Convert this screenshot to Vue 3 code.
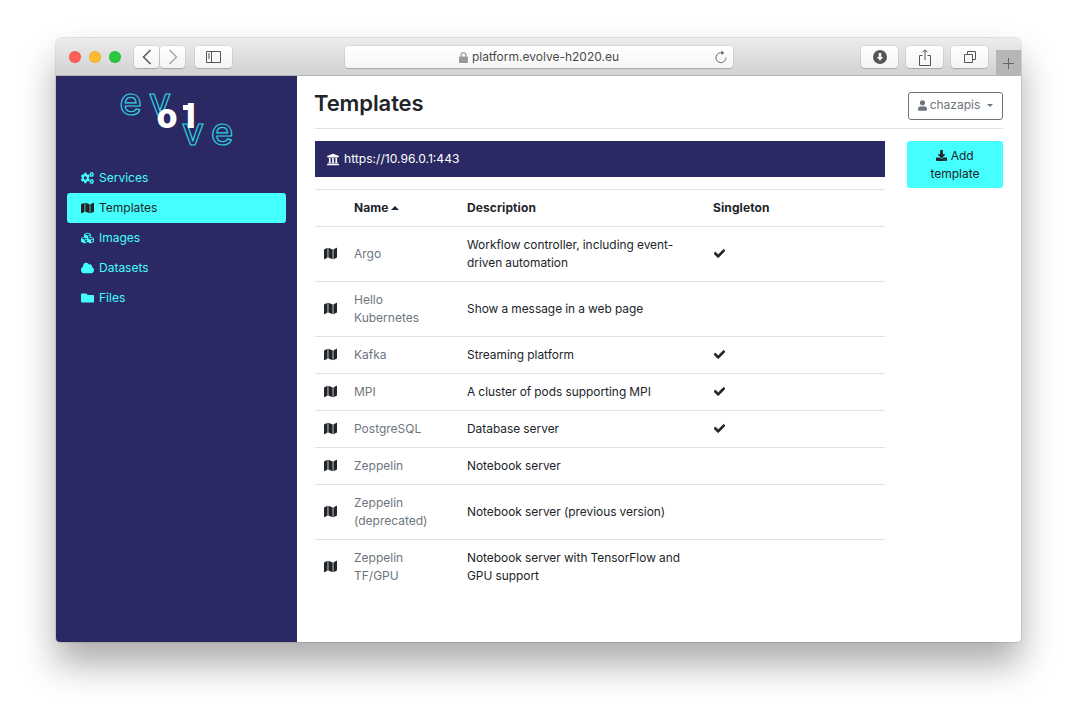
<template>
  <div class="desktop">
    <div class="window">
      <div class="toolbar">
        <div class="lights">
          <span class="light red"></span>
          <span class="light yellow"></span>
          <span class="light green"></span>
        </div>
        <div class="nav-pair">
          <button class="tool tool-half">
            <svg width="10" height="16" viewBox="0 0 10 16"><path d="M8.5 1 1.5 8l7 7" fill="none" stroke="#555" stroke-width="1.5" /></svg>
          </button>
          <button class="tool tool-half">
            <svg width="10" height="16" viewBox="0 0 10 16"><path d="M1.5 1l7 7-7 7" fill="none" stroke="#aaa" stroke-width="1.5" /></svg>
          </button>
        </div>
        <button class="tool tool-wide sidebar-btn">
          <svg width="15" height="12" viewBox="0 0 15 12"><path d="M.5.5h14v11H.5zM5.5.5v11M2 3h2M2 5h2M2 7h2" fill="none" stroke="#555" stroke-width="1" /></svg>
        </button>
        <div class="address">
          <svg class="lock" width="9" height="11" viewBox="0 0 9 11"><path d="M2 5V3.2a2.5 2.5 0 0 1 5 0V5" fill="none" stroke="#999" stroke-width="1.2" /><rect y="4.6" width="9" height="6.4" rx="1" fill="#999" /></svg>
          <span>platform.evolve-h2020.eu</span>
          <svg class="reload" width="12" height="14" viewBox="0 0 12 14"><path d="M7.6 2.9A5 5 0 1 0 11 7.600" fill="none" stroke="#666" stroke-width="1" /><path d="M6.400.6 9.400 3 6.400 5z" fill="#666" /></svg>
        </div>
        <div class="tools-right">
          <button class="tool tool-wide">
            <svg width="14" height="14" viewBox="0 0 14 14"><circle cx="7" cy="7" r="7" fill="#555" /><path d="M5.700 3h2.600v4h2L7 10.800 3.700 7h2z" fill="#f4f4f4" /></svg>
          </button>
          <button class="tool tool-wide">
            <svg width="12" height="17" viewBox="0 0 12 17"><path d="M3.500 6.500H.5v10h11v-10h-3M6 11V1M3.500 3.300 6 .8l2.500 2.500" fill="none" stroke="#555" stroke-width="1" /></svg>
          </button>
          <button class="tool tool-wide">
            <svg width="12" height="12" viewBox="0 0 12 12"><path d="M3.500 3V.5h8v8H9M.5 3.500h8v8h-8z" fill="none" stroke="#555" stroke-width="1" /></svg>
          </button>
        </div>
        <div class="new-tab">
          <svg width="11" height="11" viewBox="0 0 11 11"><path d="M5.500 0v11M0 5.500h11" stroke="#666" stroke-width="1" /></svg>
        </div>
      </div>

      <div class="page">
        <aside class="sidebar">
          <div class="logo">
            <svg width="116" height="60" viewBox="0 0 116 60">
              <text class="logo-thin" x="-1.500" y="28.500">e</text>
              <text class="logo-thin" x="28" y="29">v</text>
              <text class="logo-thin" x="61" y="59">v</text>
              <text class="logo-thin" x="90" y="58.500">e</text>
              <text class="logo-bold" x="35.500" y="42">o</text>
              <rect x="62" y="19" width="7" height="5" fill="#fff" />
              <text class="logo-bold" x="65" y="42">l</text>
            </svg>
          </div>
          <nav class="menu">
            <a v-for="item in menu" :key="item.name" class="menu-item" :class="{ active: item.name === 'Templates' }">
              <svg class="menu-icon" :viewBox="item.box" fill="currentColor" preserveAspectRatio="none"><path :d="item.icon" /></svg>
              <span>{{ item.name }}</span>
            </a>
          </nav>
        </aside>

        <main class="content">
          <header class="head">
            <h1>Templates</h1>
            <button class="user-btn">
              <svg class="fa-user" viewBox="0 0 448 512" fill="currentColor"><path :d="icons.user" /></svg>
              <span>chazapis</span>
              <i class="caret"></i>
            </button>
          </header>
          <div class="columns">
            <section class="main-col">
              <div class="banner">
                <svg class="fa-bank" viewBox="0 0 512 512" fill="currentColor"><path :d="icons.bank" /></svg>
                <span>https://10.96.0.1:443</span>
              </div>
              <table class="list">
                <colgroup>
                  <col style="width: 30px" />
                  <col style="width: 113px" />
                  <col style="width: 246px" />
                  <col />
                </colgroup>
                <thead>
                  <tr>
                    <th></th>
                    <th>Name <i class="sort"></i></th>
                    <th>Description</th>
                    <th>Singleton</th>
                  </tr>
                </thead>
                <tbody>
                  <tr v-for="row in rows" :key="row.name">
                    <td><svg class="fa-map" viewBox="0 0 576 512" fill="currentColor" preserveAspectRatio="none"><path :d="icons.map" /></svg></td>
                    <td class="name">{{ row.name }}</td>
                    <td class="desc">{{ row.desc }}</td>
                    <td>
                      <svg v-if="row.single" class="fa-check" viewBox="0 0 512 512" fill="currentColor"><path :d="icons.check" /></svg>
                    </td>
                  </tr>
                </tbody>
              </table>
            </section>
            <aside class="side-col">
              <button class="add-btn">
                <svg class="fa-dl" viewBox="0 0 512 512" fill="currentColor"><path :d="icons.download" /></svg>
                Add template
              </button>
            </aside>
          </div>
        </main>
      </div>
    </div>
  </div>
</template>

<script setup>
const icons = {
  map: "M0 117.66v346.32c0 11.32 11.43 19.06 21.94 14.86L160 416V32L20.12 87.95A32.006 32.006 0 0 0 0 117.66zM192 416l192 64V96L192 32v384zM554.06 33.16L416 96v384l139.88-55.95A31.996 31.996 0 0 0 576 394.34V48.02c0-11.32-11.43-19.06-21.94-14.86z",
  check: "M173.898 439.404l-166.4-166.4c-9.997-9.997-9.997-26.206 0-36.204l36.203-36.204c9.997-9.998 26.207-9.998 36.204 0L192 312.69 432.095 72.596c9.997-9.997 26.207-9.997 36.204 0l36.203 36.204c9.997 9.997 9.997 26.206 0 36.204l-294.4 294.401c-9.998 9.997-26.207 9.997-36.204-.001z",
  user: "M224 256c70.7 0 128-57.3 128-128S294.7 0 224 0 96 57.3 96 128s57.3 128 128 128zm89.6 32h-16.7c-22.2 10.2-46.9 16-72.9 16s-50.6-5.8-72.9-16h-16.7C60.2 288 0 348.2 0 422.4V464c0 26.5 21.5 48 48 48h352c26.5 0 48-21.5 48-48v-41.6c0-74.2-60.2-134.4-134.4-134.4z",
  download: "M216 0h80c13.3 0 24 10.7 24 24v168h87.7c17.8 0 26.7 21.5 14.1 34.1L269.7 378.3c-7.5 7.5-19.8 7.5-27.3 0L90.1 226.1c-12.6-12.6-3.7-34.1 14.1-34.1H192V24c0-13.3 10.7-24 24-24zm296 376v112c0 13.3-10.7 24-24 24H24c-13.3 0-24-10.7-24-24V376c0-13.3 10.7-24 24-24h146.7l49 49c20.1 20.1 52.5 20.1 72.6 0l49-49H488c13.3 0 24 10.7 24 24zm-124 88c0-11-9-20-20-20s-20 9-20 20 9 20 20 20 20-9 20-20zm64 0c0-11-9-20-20-20s-20 9-20 20 9 20 20 20 20-9 20-20z",
  bank: "M496 128v16a8 8 0 0 1-8 8h-24v12c0 6.627-5.373 12-12 12H60c-6.627 0-12-5.373-12-12v-12H24a8 8 0 0 1-8-8v-16a8 8 0 0 1 4.941-7.392l232-88a7.996 7.996 0 0 1 6.118 0l232 88A8 8 0 0 1 496 128zm-24 304H40c-13.255 0-24 10.745-24 24v16a8 8 0 0 0 8 8h464a8 8 0 0 0 8-8v-16c0-13.255-10.745-24-24-24zM96 192v192H60c-6.627 0-12 5.373-12 12v20h416v-20c0-6.627-5.373-12-12-12h-36V192h-64v192h-64V192h-64v192h-64V192H96z",
  cogs: "M512.1 191l-8.2 14.3c-3 5.3-9.4 7.5-15.1 5.4-11.8-4.4-22.6-10.7-32.1-18.6-4.6-3.8-5.8-10.5-2.8-15.7l8.2-14.3c-6.9-8-12.3-17.3-15.9-27.4h-16.5c-6 0-11.2-4.3-12.2-10.3-2-12-2.1-24.6 0-37.1 1-6 6.2-10.4 12.2-10.4h16.5c3.6-10.1 9-19.4 15.9-27.4l-8.2-14.3c-3-5.2-1.9-11.9 2.8-15.7 9.5-7.9 20.4-14.2 32.1-18.6 5.7-2.1 12.1.1 15.1 5.4l8.2 14.3c10.5-1.9 21.2-1.9 31.7 0L552 6.3c3-5.3 9.4-7.5 15.1-5.4 11.8 4.4 22.6 10.7 32.1 18.6 4.6 3.8 5.8 10.5 2.8 15.7l-8.2 14.3c6.9 8 12.3 17.3 15.9 27.4h16.5c6 0 11.2 4.3 12.2 10.3 2 12 2.1 24.6 0 37.1-1 6-6.2 10.4-12.2 10.4h-16.5c-3.6 10.1-9 19.4-15.9 27.4l8.2 14.3c3 5.2 1.9 11.9-2.8 15.7-9.5 7.9-20.4 14.2-32.1 18.6-5.7 2.1-12.1-.1-15.1-5.4l-8.2-14.3c-10.4 1.9-21.2 1.9-31.7 0zm-10.5-58.8c38.5 29.6 82.4-14.3 52.8-52.8-38.5-29.7-82.4 14.3-52.8 52.8zM386.3 286.1l33.7 16.8c10.1 5.8 14.5 18.1 10.5 29.1-8.9 24.2-26.4 46.4-42.6 65.8-7.4 8.9-20.2 11.1-30.3 5.3l-29.1-16.8c-16 13.7-34.6 24.6-54.9 31.7v33.6c0 11.6-8.3 21.6-19.7 23.6-24.6 4.2-50.4 4.4-75.9 0-11.5-2-20-11.9-20-23.6V418c-20.3-7.2-38.9-18-54.9-31.7L74 403c-10 5.8-22.9 3.6-30.3-5.3-16.2-19.4-33.3-41.6-42.2-65.7-4-10.9.4-23.2 10.5-29.1l33.3-16.8c-3.9-20.9-3.9-42.4 0-63.4L12 205.8c-10.1-5.8-14.6-18.1-10.5-29 8.9-24.2 26-46.4 42.2-65.8 7.4-8.9 20.2-11.1 30.3-5.3l29.1 16.8c16-13.7 34.6-24.6 54.9-31.7V57.1c0-11.5 8.2-21.5 19.6-23.5 24.6-4.2 50.5-4.4 76-.1 11.5 2 20 11.9 20 23.6v33.6c20.3 7.2 38.9 18 54.9 31.7l29.1-16.8c10-5.8 22.9-3.6 30.3 5.3 16.2 19.4 33.2 41.6 42.1 65.8 4 10.9.1 23.2-10 29.1l-33.7 16.8c3.9 21 3.9 42.5 0 63.5zm-117.6 21.1c59.2-77-28.7-164.9-105.7-105.7-59.2 77 28.7 164.9 105.7 105.7zm243.4 182.7l-8.2 14.3c-3 5.3-9.4 7.5-15.1 5.4-11.8-4.4-22.6-10.7-32.1-18.6-4.6-3.8-5.8-10.5-2.8-15.7l8.2-14.3c-6.9-8-12.3-17.3-15.9-27.4h-16.5c-6 0-11.2-4.3-12.2-10.3-2-12-2.1-24.6 0-37.1 1-6 6.2-10.4 12.2-10.4h16.5c3.6-10.1 9-19.4 15.9-27.4l-8.2-14.3c-3-5.2-1.9-11.9 2.8-15.7 9.5-7.9 20.4-14.2 32.1-18.6 5.7-2.1 12.1.1 15.1 5.4l8.2 14.3c10.5-1.9 21.2-1.9 31.7 0l8.2-14.3c3-5.3 9.4-7.5 15.1-5.4 11.8 4.4 22.6 10.7 32.1 18.6 4.6 3.8 5.8 10.5 2.8 15.7l-8.2 14.3c6.9 8 12.3 17.3 15.9 27.4h16.5c6 0 11.2 4.3 12.2 10.3 2 12 2.1 24.6 0 37.1-1 6-6.2 10.4-12.2 10.4h-16.5c-3.6 10.1-9 19.4-15.9 27.4l8.2 14.3c3 5.2 1.9 11.9-2.8 15.7-9.5 7.9-20.4 14.2-32.1 18.6-5.7 2.1-12.1-.1-15.1-5.4l-8.2-14.3c-10.4 1.9-21.2 1.9-31.7 0zM501.6 431c38.5 29.6 82.4-14.3 52.8-52.8-38.5-29.6-82.4 14.3-52.8 52.8z",
  cubes: "M488.6 250.2L392 214V105.5c0-15-9.3-28.4-23.4-33.7l-100-37.5c-8.1-3.1-17.1-3.1-25.3 0l-100 37.5c-14.1 5.3-23.4 18.7-23.4 33.7V214l-96.6 36.2C9.3 255.5 0 268.9 0 283.9V394c0 13.6 7.7 26.1 19.9 32.2l100 50c10.1 5.1 22.1 5.1 32.2 0l103.9-52 103.9 52c10.1 5.1 22.1 5.1 32.2 0l100-50c12.2-6.1 19.9-18.6 19.9-32.2V283.9c0-15-9.3-28.4-23.4-33.7zM358 214.8l-85 31.9v-68.2l85-37v73.3zM154 104.1l102-38.2 102 38.2v.6l-102 41.4-102-41.4v-.6zm84 291.1l-85 42.5v-79.1l85-38.8v75.4zm0-112l-102 41.4-102-41.4v-.6l102-38.2 102 38.2v.6zm240 112l-85 42.5v-79.1l85-38.8v75.4zm0-112l-102 41.4-102-41.4v-.6l102-38.2 102 38.2v.6z",
  cloud: "M537.6 226.6c4.1-10.7 6.4-22.4 6.4-34.6 0-53-43-96-96-96-19.7 0-38.1 6-53.3 16.2C367 64.2 315.3 32 256 32c-88.4 0-160 71.6-160 160 0 2.7.1 5.4.2 8.1C40.2 219.8 0 273.2 0 336c0 79.5 64.5 144 144 144h368c70.7 0 128-57.3 128-128 0-61.9-44-113.6-102.4-125.4z",
  folder: "M464 128H272l-64-64H48C21.49 64 0 85.49 0 112v288c0 26.51 21.49 48 48 48h416c26.51 0 48-21.49 48-48V176c0-26.51-21.49-48-48-48z",
};

const menu = [
  { name: "Services", icon: icons.cogs, box: "0 0 640 512" },
  { name: "Templates", icon: icons.map, box: "0 0 576 512" },
  { name: "Images", icon: icons.cubes, box: "0 0 512 512" },
  { name: "Datasets", icon: icons.cloud, box: "0 0 640 512" },
  { name: "Files", icon: icons.folder, box: "0 0 512 512" },
];

const rows = [
  { name: "Argo", desc: "Workflow controller, including event-driven automation", single: true },
  { name: "Hello Kubernetes", desc: "Show a message in a web page", single: false },
  { name: "Kafka", desc: "Streaming platform", single: true },
  { name: "MPI", desc: "A cluster of pods supporting MPI", single: true },
  { name: "PostgreSQL", desc: "Database server", single: true },
  { name: "Zeppelin", desc: "Notebook server", single: false },
  { name: "Zeppelin (deprecated)", desc: "Notebook server (previous version)", single: false },
  { name: "Zeppelin TF/GPU", desc: "Notebook server with TensorFlow and GPU support", single: false },
];
</script>

<style>
html,
body {
  background: #fff;
}
</style>

<style scoped>
.desktop {
  padding: 38px 56px 74px;
  font-family: Inter, "Liberation Sans", sans-serif;
  font-size: 12px;
  line-height: 18px;
  color: #212529;
}

.window {
  width: 965px;
  height: 604px;
  display: flex;
  flex-direction: column;
  border-radius: 6px 6px 4px 4px;
  overflow: hidden;
  background: #fff;
  box-shadow: 0 22px 36px rgba(0, 0, 0, 0.33), 0 0 0 1px rgba(0, 0, 0, 0.1);
}

.toolbar {
  height: 38px;
  flex: none;
  display: flex;
  align-items: flex-start;
  padding-top: 8px;
  padding-left: 13px;
  box-sizing: border-box;
  background: linear-gradient(#ececec, #d2d2d2);
  border-bottom: 1px solid #b4b4b4;
}

.lights {
  display: flex;
  gap: 8px;
  margin-top: 5px;
}

.light {
  width: 12px;
  height: 12px;
  border-radius: 50%;
  box-sizing: border-box;
  border: 1px solid rgba(0, 0, 0, 0.08);
}

.red { background: #fe5f57; }
.yellow { background: #febc2e; }
.green { background: #29c840; }

.nav-pair {
  display: flex;
  margin-left: 13px;
}

.tool {
  height: 22px;
  padding: 0;
  display: flex;
  align-items: center;
  justify-content: center;
  border: none;
  border-radius: 4px;
  background: linear-gradient(#fff, #f4f4f4);
  box-shadow: 0 0 0 0.5px rgba(0, 0, 0, 0.1), 0 1px 1px rgba(0, 0, 0, 0.18);
}

.tool-half { width: 25px; margin-right: 1px; }
.tool-wide { width: 37px; }
.sidebar-btn { margin-left: 9px; }

.address {
  width: 388px;
  height: 22px;
  margin-left: 113px;
  display: flex;
  align-items: center;
  justify-content: center;
  gap: 4px;
  position: relative;
  border-radius: 4px;
  background: linear-gradient(#fff, #f6f6f6);
  box-shadow: 0 0 0 0.5px rgba(0, 0, 0, 0.1), 0 1px 1px rgba(0, 0, 0, 0.18);
  color: #4a4a4a;
  font-size: 12px;
}

.reload {
  position: absolute;
  right: 6px;
  top: 4px;
}

.tools-right {
  display: flex;
  gap: 8px;
  margin-left: 128px;
}

.new-tab {
  width: 25px;
  height: 26px;
  margin-top: 4px;
  margin-left: 8px;
  display: flex;
  align-items: center;
  justify-content: center;
  background: #b6b6b6;
}

.page {
  flex: 1;
  display: flex;
  min-height: 0;
}

.sidebar {
  width: 241px;
  flex: none;
  padding: 0 11px;
  box-sizing: border-box;
  background: #2a2963;
}

.logo {
  height: 87px;
  box-sizing: border-box;
  padding-top: 10px;
  padding-left: 54px;
}

.logo svg {
  display: block;
  overflow: visible;
}

.logo-thin {
  font-family: Inter, sans-serif;
  font-size: 38px;
  font-weight: 500;
  fill: none;
  stroke: #2fd0e0;
  stroke-width: 1.2;
}

.logo-bold {
  font-family: Inter, sans-serif;
  font-size: 34px;
  font-weight: 800;
  fill: #fff;
}

.menu {
  display: flex;
  flex-direction: column;
}

.menu-item {
  height: 30px;
  display: flex;
  align-items: center;
  gap: 5px;
  padding-left: 14px;
  border-radius: 3px;
  color: #45fefe;
}

.menu-item.active {
  background: #45fefe;
  color: #212529;
}

.menu-icon {
  width: 13px;
  height: 12px;
}

.content {
  flex: 1;
  min-width: 0;
  padding: 0 18px;
}

.head {
  height: 53px;
  box-sizing: border-box;
  display: flex;
  justify-content: space-between;
  align-items: flex-start;
  padding-top: 15px;
  border-bottom: 1px solid #dee2e6;
}

h1 {
  margin: 0 0 0 -1px;
  font-size: 22px;
  line-height: 24px;
  font-weight: 600;
  letter-spacing: -0.1px;
}

.user-btn {
  width: 95px;
  height: 28px;
  margin-top: 1px;
  display: flex;
  align-items: center;
  justify-content: center;
  gap: 3px;
  padding: 0 0 2px;
  border: 1px solid #6c757d;
  border-radius: 3px;
  background: #fff;
  color: #6c757d;
  font: inherit;
}

.fa-user {
  width: 9px;
  height: 11px;
  margin-top: 0;
}

.fa-dl {
  width: 11px;
  height: 11px;
  vertical-align: -1px;
}

.caret {
  width: 0;
  height: 0;
  margin-left: 4px;
  border-top: 3px solid currentColor;
  border-left: 3px solid transparent;
  border-right: 3px solid transparent;
}

.columns {
  display: flex;
  gap: 22px;
  padding-top: 12px;
}

.main-col {
  width: 570px;
  flex: none;
}

.side-col {
  flex: 1;
}

.banner {
  height: 36px;
  display: flex;
  align-items: center;
  gap: 4px;
  padding-left: 11px;
  background: #2a2963;
  color: #fff;
  font-size: 12.100px;
}

.fa-bank {
  width: 14px;
  height: 13px;
}

.list {
  width: 100%;
  margin-top: 12px;
  border-collapse: collapse;
  table-layout: fixed;
}

.list th,
.list td {
  padding: 9px;
  text-align: left;
  vertical-align: middle;
  border-top: 1px solid #dee2e6;
}

.list th {
  font-weight: 700;
  letter-spacing: 0.1px;
}

.list thead th {
  border-bottom: 1px solid #dee2e6;
}

.sort {
  display: inline-block;
  width: 0;
  height: 0;
  margin-left: -1px;
  vertical-align: 2px;
  border-bottom: 4px solid currentColor;
  border-left: 4px solid transparent;
  border-right: 4px solid transparent;
}

.name {
  color: #6c757d;
}

.desc {
  font-size: 11.900px;
  word-spacing: -0.2px;
}

.fa-map {
  display: block;
  width: 13px;
  height: 13px;
  margin-top: -1px;
}

.fa-check {
  display: block;
  width: 11px;
  height: 11px;
  margin-left: 1px;
  margin-top: -1px;
  stroke: currentColor;
  stroke-width: 30;
}

.add-btn {
  width: 96px;
  display: block;
  padding: 6px 12px 5px;
  border: none;
  border-radius: 3px;
  background: #45fefe;
  color: #212529;
  font: inherit;
  text-align: center;
}
</style>
